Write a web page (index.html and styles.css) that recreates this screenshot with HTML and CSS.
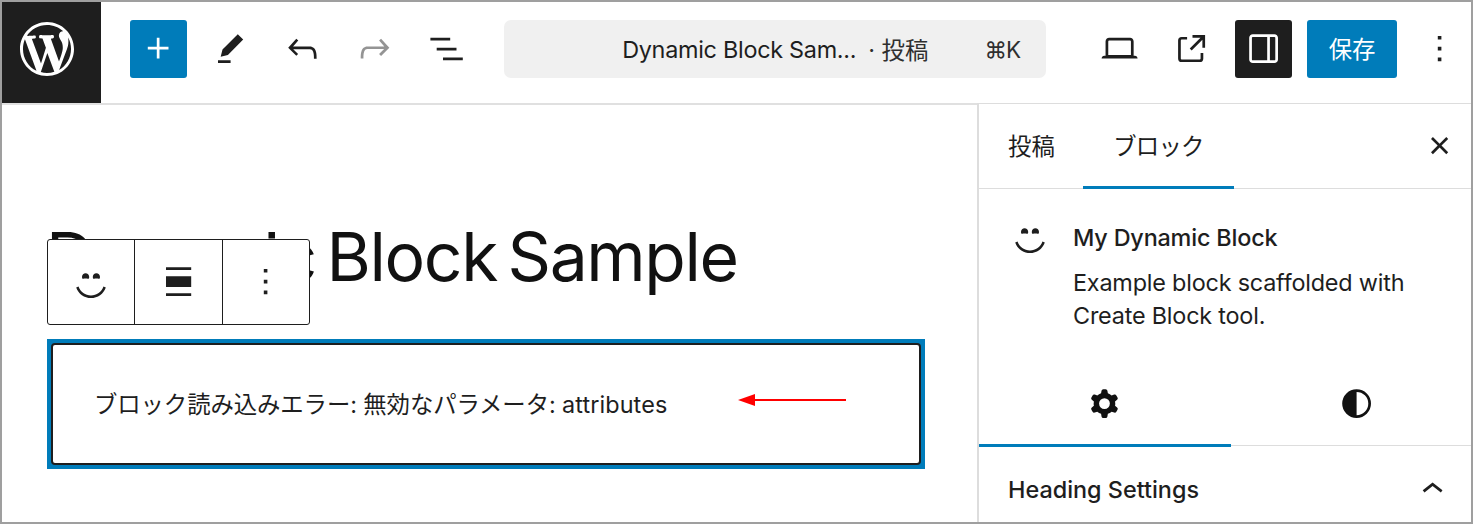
FILE: index.html
```html
<!DOCTYPE html>
<html lang="ja">
<head>
    <meta charset="UTF-8">
    <meta name="viewport" content="width=device-width, initial-scale=1.0">
    <title>Dynamic Block Sample</title>
    <link rel="stylesheet" href="styles.css">
</head>
<body>
    <div class="editor">
        <header class="header">
            <a class="logo">
                <svg viewBox="0 0 20 20"><path d="M20 10c0-5.51-4.49-10-10-10C4.48 0 0 4.49 0 10c0 5.52 4.48 10 10 10 5.51 0 10-4.48 10-10zM7.78 15.37L4.37 6.22c.55-.02 1.17-.08 1.17-.08.5-.06.44-1.13-.06-1.11 0 0-1.45.11-2.37.11-.18 0-.37 0-.58-.01C4.12 2.69 6.87 1.11 10 1.11c2.33 0 4.45.87 6.05 2.34-.68-.11-1.65.39-1.65 1.58 0 .74.45 1.36.9 2.1.35.61.55 1.36.55 2.46 0 1.49-1.4 5-1.4 5l-3.03-8.37c.54-.02.82-.17.82-.17.5-.05.44-1.25-.06-1.22 0 0-1.44.12-2.38.12-.87 0-2.33-.12-2.33-.12-.5-.03-.56 1.2-.06 1.22l.92.08 1.26 3.41zM17.41 10c.24-.64.74-1.87.43-4.25.7 1.29 1.05 2.71 1.05 4.25 0 3.29-1.73 6.24-4.4 7.78.97-2.59 1.94-5.2 2.92-7.78zM6.1 18.09C3.12 16.65 1.11 13.53 1.11 10c0-1.3.23-2.48.72-3.59C3.25 10.3 4.67 14.2 6.1 18.09zm4.03-6.63l2.58 6.98c-.86.29-1.76.45-2.71.45-.79 0-1.57-.11-2.29-.33.81-2.38 1.62-4.74 2.42-7.1z"/></svg>
            </a>
            <button class="inserter">
                <svg class="icon" viewBox="0 0 24 24"><path d="M11 12.5V17.5H12.5V12.5H17.5V11H12.5V6H11V11H6V12.5H11Z"/></svg>
            </button>
            <div class="tools">
                <svg class="icon" viewBox="0 0 24 24"><path d="m19 7-3-3-8.5 8.5-1 4 4-1L19 7Zm-7 11.5H5V20h7v-1.5Z"/></svg>
                <svg class="icon" viewBox="0 0 24 24"><path d="M18.3 11.7c-.6-.6-1.4-.9-2.3-.9H6.7l2.9-3.3-1.1-1-4.5 5L8.5 16l1-1-2.7-2.7H16c.5 0 .9.2 1.3.5 1 1 1 3.4 1 4.5v.3h1.5v-.2c0-1.5 0-4.3-1.5-5.7z"/></svg>
                <svg class="icon disabled" viewBox="0 0 24 24"><path d="M15.6 6.5l-1.1 1 2.9 3.3H8c-.9 0-1.7.3-2.3.9-1.4 1.5-1.4 4.2-1.4 5.6v.2h1.5v-.3c0-1.1 0-3.5 1-4.5.3-.3.7-.5 1.3-.5h9.2L14.5 15l1.1 1.1 4.6-4.6-4.6-5z"/></svg>
                <svg class="icon" viewBox="0 0 24 24"><path d="M3 6h11v1.5H3V6Zm3.5 5.5h11V13h-11v-1.5ZM21 17H10v1.5h11V17Z"/></svg>
            </div>
            <div class="command-bar">
                <span class="doc-title">Dynamic Block Sam...</span>
                <span class="doc-type">· 投稿</span>
                <span class="shortcut">⌘K</span>
            </div>
            <div class="settings">
                <svg class="icon" viewBox="0 0 24 24"><path d="M20.5 16h-.7V8c0-1.1-.9-2-2-2H6.2c-1.1 0-2 .9-2 2v8h-.7c-.8 0-1.5.7-1.5 1.5h20c0-.8-.7-1.5-1.5-1.5zM5.7 8c0-.3.2-.5.5-.5h11.6c.3 0 .5.2.5.5v7.6H5.7V8z"/></svg>
                <svg class="icon" viewBox="0 0 24 24"><path d="M19.5 4.5h-7V6h4.44l-5.97 5.97 1.06 1.06L18 7.06v4.44h1.5v-7Zm-13 1a2 2 0 0 0-2 2v10a2 2 0 0 0 2 2h10a2 2 0 0 0 2-2v-3H17v3a.5.5 0 0 1-.5.5h-10a.5.5 0 0 1-.5-.5v-10a.5.5 0 0 1 .5-.5h3V5.5h-3Z"/></svg>
            </div>
            <button class="sidebar-toggle">
                <svg class="icon" viewBox="0 0 24 24"><path d="M18 4H6c-1.1 0-2 .9-2 2v12c0 1.1.9 2 2 2h12c1.1 0 2-.9 2-2V6c0-1.1-.9-2-2-2zm-4 14.5H6c-.3 0-.5-.2-.5-.5V6c0-.3.2-.5.5-.5h8v13zm4.5-.5c0 .3-.2.5-.5.5h-2.5v-13H18c.3 0 .5.2.5.5v12z"/></svg>
            </button>
            <button class="save">保存</button>
            <svg class="icon more" viewBox="0 0 24 24"><path d="M13 19h-2v-2h2v2zm0-6h-2v-2h2v2zm0-6h-2V5h2v2z"/></svg>
        </header>

        <div class="body">
            <main class="canvas">
                <h1 class="post-title">Dynamic Block Sample</h1>
                <div class="toolbar">
                    <div class="toolbar-item">
                        <svg class="dashicon" viewBox="0 0 20 20"><path d="M7 5.2c1.1 0 2 .89 2 2 0 .37-.11.71-.28 1C8.72 8.2 8 8 7 8s-1.72.2-1.72.2c-.17-.29-.28-.63-.28-1 0-1.11.9-2 2-2zm6 0c1.11 0 2 .89 2 2 0 .37-.11.71-.28 1 0 0-.72-.2-1.72-.2s-1.72.2-1.72.2c-.17-.29-.28-.63-.28-1 0-1.11.89-2 2-2zm-3 13.7c3.72 0 7.03-2.36 8.23-5.88l-1.32-.46C15.9 15.52 13.12 17.5 10 17.5s-5.9-1.98-6.91-4.94l-1.32.46c1.2 3.52 4.51 5.88 8.23 5.88z"/></svg>
                    </div>
                    <div class="toolbar-item">
                        <svg class="icon" viewBox="0 0 24 24"><path d="M5 5.5h14V4H5v1.5ZM5 20h14v-1.5H5V20ZM5 9h14v6H5V9Z"/></svg>
                    </div>
                    <div class="toolbar-item">
                        <svg class="icon" viewBox="0 0 24 24"><path d="M13 19h-2v-2h2v2zm0-6h-2v-2h2v2zm0-6h-2V5h2v2z"/></svg>
                    </div>
                </div>
                <div class="block">
                    <div class="placeholder">
                        <p class="error">ブロック読み込みエラー: 無効なパラメータ: <span class="param">attributes</span></p>
                        <svg class="arrow" viewBox="0 0 108 12"><path d="M0 6 17 0v12z"/><path d="M16 5h92v2H16z"/></svg>
                    </div>
                </div>
            </main>

            <aside class="sidebar">
                <div class="tabs">
                    <div class="tab">投稿</div>
                    <div class="tab active">ブロック</div>
                    <svg class="icon close" viewBox="0 0 24 24"><path d="M12 13.06l3.712 3.713 1.061-1.06L13.061 12l3.712-3.712-1.06-1.06L12 10.938 8.288 7.227l-1.061 1.06L10.939 12l-3.712 3.712 1.06 1.061L12 13.061z"/></svg>
                </div>
                <div class="block-card">
                    <svg class="dashicon" viewBox="0 0 20 20"><path d="M7 5.2c1.1 0 2 .89 2 2 0 .37-.11.71-.28 1C8.72 8.2 8 8 7 8s-1.72.2-1.72.2c-.17-.29-.28-.63-.28-1 0-1.11.9-2 2-2zm6 0c1.11 0 2 .89 2 2 0 .37-.11.71-.28 1 0 0-.72-.2-1.72-.2s-1.72.2-1.72.2c-.17-.29-.28-.63-.28-1 0-1.11.89-2 2-2zm-3 13.7c3.72 0 7.03-2.36 8.23-5.88l-1.32-.46C15.9 15.52 13.12 17.5 10 17.5s-5.9-1.98-6.91-4.94l-1.32.46c1.2 3.52 4.51 5.88 8.23 5.88z"/></svg>
                    <div>
                        <h2 class="card-title">My Dynamic Block</h2>
                        <p class="card-text">Example block scaffolded with<br>Create Block tool.</p>
                    </div>
                </div>
                <div class="icon-tabs">
                    <div class="icon-tab active">
                        <svg class="icon" viewBox="0 0 24 24"><path fill-rule="evenodd" d="M10.289 4.836A1 1 0 0111.275 4h1.306a1 1 0 01.987.836l.244 1.466c.787.26 1.503.679 2.108 1.218l1.393-.522a1 1 0 011.216.437l.653 1.13a1 1 0 01-.23 1.273l-1.148.944a6.025 6.025 0 010 2.435l1.149.946a1 1 0 01.23 1.272l-.653 1.13a1 1 0 01-1.216.437l-1.394-.522c-.605.54-1.32.958-2.108 1.218l-.244 1.466a1 1 0 01-.987.836h-1.306a1 1 0 01-.986-.836l-.244-1.466a5.995 5.995 0 01-2.108-1.218l-1.394.522a1 1 0 01-1.217-.436l-.653-1.131a1 1 0 01.23-1.272l1.149-.946a6.026 6.026 0 010-2.435l-1.148-.944a1 1 0 01-.23-1.272l.653-1.131a1 1 0 011.217-.437l1.393.522a5.994 5.994 0 012.108-1.218l.244-1.466zM14.929 12a3 3 0 11-6 0 3 3 0 016 0z"/></svg>
                    </div>
                    <div class="icon-tab">
                        <svg class="icon" viewBox="0 0 24 24"><path fill-rule="evenodd" d="M20 12a8 8 0 1 1-16 0 8 8 0 0 1 16 0Zm-1.5 0a6.5 6.5 0 0 1-6.5 6.5v-13a6.5 6.5 0 0 1 6.5 6.5Z"/></svg>
                    </div>
                </div>
                <div class="panel">
                    <h2 class="panel-title">Heading Settings</h2>
                    <svg class="icon" viewBox="0 0 24 24"><path d="M6.5 12.4L12 8l5.5 4.4-.9 1.2L12 10l-4.5 3.6-1-1.2z"/></svg>
                </div>
            </aside>
        </div>
    </div>
</body>
</html>
```
FILE: styles.css
```css
* {
    box-sizing: border-box;
}

body {
    margin: 0;
    font-family: Inter, "Noto Sans CJK JP", sans-serif;
    font-size: 23.4px;
    color: #1e1e1e;
}

h1, h2, p {
    margin: 0;
}

button {
    display: flex;
    align-items: center;
    justify-content: center;
    padding: 0;
    border: none;
    border-radius: 3px;
    font: inherit;
    color: #fff;
}

svg {
    display: block;
    flex: none;
    fill: currentColor;
}

.icon {
    width: 43.2px;
    height: 43.2px;
}

.dashicon {
    width: 36px;
    height: 36px;
}

.editor {
    display: flex;
    flex-direction: column;
    width: 1473px;
    height: 524px;
    border: 2px solid #9f9f9f;
    background-color: #fff;
    overflow: hidden;
}

/* header */
.header {
    display: flex;
    align-items: center;
    flex: none;
    height: 101px;
    padding-bottom: 7px;
}

.logo {
    display: flex;
    align-items: center;
    justify-content: center;
    width: 99px;
    height: 101px;
    margin-bottom: -7px;
    padding: 0 8.5px 6.5px 0;
    background-color: #1e1e1e;
    color: #fff;
}

.logo svg {
    width: 54px;
    height: 54px;
}

.inserter {
    width: 57px;
    height: 58px;
    margin-left: 29px;
    background-color: #007cba;
}

.tools {
    display: flex;
    gap: 28.8px;
    margin-left: 22px;
}

.disabled {
    color: #949494;
}

.command-bar {
    display: flex;
    align-items: center;
    width: 542px;
    height: 58px;
    margin-left: 36px;
    padding: 0 24px 0 118px;
    border-radius: 7px;
    background-color: #f0f0f0;
    white-space: nowrap;
}

.doc-title {
    letter-spacing: -0.28px;
}

.doc-type {
    margin-left: 12px;
    color: #2f2f2f;
}

.shortcut {
    margin-left: auto;
    font-size: 22.5px;
    letter-spacing: -1px;
    padding-right: 2px;
    color: #2f2f2f;
}

.settings {
    display: flex;
    gap: 29px;
    margin-left: 51.6px;
}

.sidebar-toggle {
    width: 57px;
    height: 58px;
    margin-left: 22px;
    background-color: #1e1e1e;
}

.save {
    width: 90px;
    height: 58px;
    margin-left: 15px;
    padding-bottom: 2px;
    background-color: #007cba;
}

.more {
    margin-left: 21px;
}

.body {
    display: flex;
    flex: 1;
}

/* canvas */
.canvas {
    flex: none;
    width: 975px;
    padding: 115px 52px 0 45px;
    border-top: 2px solid #e0e0e0;
}

.post-title {
    height: 82px;
    margin-left: -1px;
    line-height: 73px;
    font-size: 67.8px;
    font-weight: 400;
    font-feature-settings: "ss07";
    letter-spacing: -1.4px;
    word-spacing: -7px;
    color: #111;
    white-space: nowrap;
}

/* floats over the lower part of the title */
.toolbar {
    position: relative;
    display: flex;
    width: 263px;
    height: 86px;
    margin-top: -63px;
    border: 1px solid #1e1e1e;
    border-radius: 3px;
    background-color: #fff;
}

.toolbar-item {
    display: flex;
    align-items: center;
    justify-content: center;
    flex: 1;
}

.toolbar-item + .toolbar-item {
    border-left: 1px solid #1e1e1e;
}

.block {
    margin-top: 14px;
    padding: 4px;
    background-color: #007cba;
}

.placeholder {
    display: flex;
    align-items: center;
    height: 122px;
    padding: 0 73px 0 41px;
    border: 2px solid #1e1e1e;
    border-radius: 4px;
    background-color: #fff;
}

.error {
    padding-bottom: 2px;
    letter-spacing: -0.1px;
    white-space: nowrap;
}

.param {
    letter-spacing: 0.1px;
}

.arrow {
    width: 108px;
    height: 12px;
    margin: 0 0 9px auto;
    fill: #f00;
}

/* sidebar */
.sidebar {
    flex: 1;
    min-width: 0;
    border-top: 1px solid #ddd;
    border-left: 2px solid #ddd;
}

.tabs {
    display: flex;
    align-items: center;
    height: 85px;
    border-bottom: 1px solid #ddd;
}

.tab {
    height: 85px;
    padding: 0 28.5px 0 29px;
    line-height: 86px;
    white-space: nowrap;
}

.tab.active {
    width: 151px;
    padding-left: 30px;
    border-bottom: 3px solid #007cba;
    letter-spacing: -0.8px;
}

.close {
    margin-left: auto;
    margin-right: 10px;
}

.block-card {
    display: flex;
    gap: 25px;
    height: 173px;
    padding: 30px 29px 0 33px;
}

.card-title {
    line-height: 38px;
    font-size: 23.4px;
    font-weight: 500;
    letter-spacing: -0.18px;
}

.card-text {
    margin-top: 9px;
    line-height: 33px;
    letter-spacing: -0.2px;
    white-space: nowrap;
}

.icon-tabs {
    display: flex;
    height: 84px;
    border-bottom: 1px solid #ddd;
}

.icon-tab {
    display: flex;
    flex: none;
    justify-content: center;
    width: 252px;
    height: 85px;
    padding-top: 20px;
    color: #111;
}

.icon-tab.active {
    border-bottom: 3px solid #007cba;
}

.panel {
    display: flex;
    align-items: center;
    justify-content: space-between;
    height: 87px;
    padding: 0 17px 0 29px;
}

.panel-title {
    font-size: 23.4px;
    font-weight: 500;
}
```
